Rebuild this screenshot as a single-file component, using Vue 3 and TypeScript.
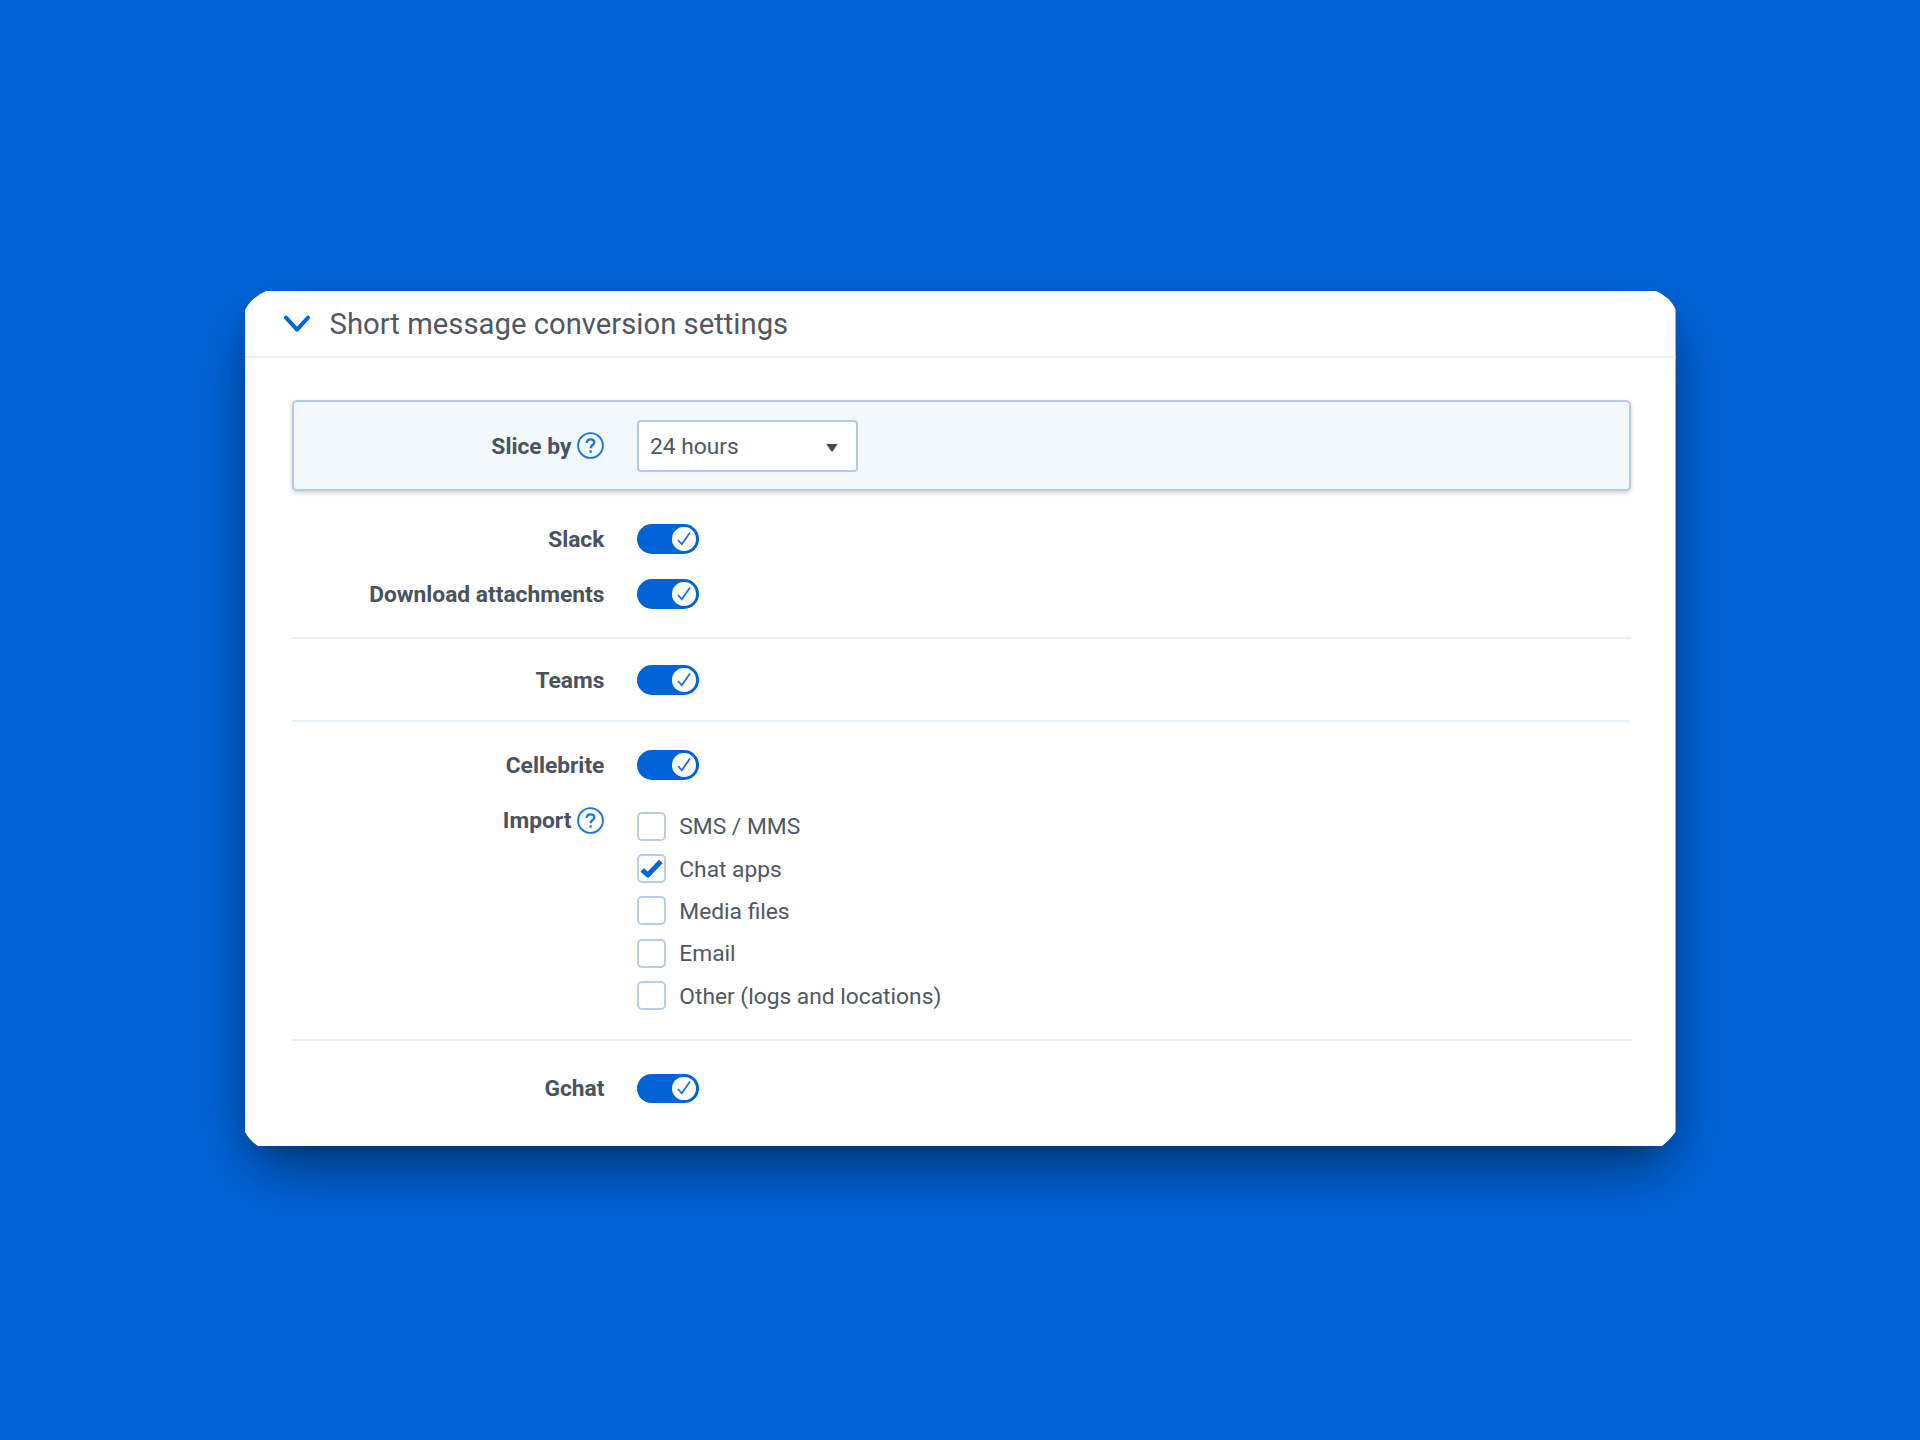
<template>
  <main class="stage">
    <div class="card-shadow">
      <section class="card">
        <header class="card-header">
          <svg class="chevron" width="28" height="20" viewBox="0 0 28 20">
            <path d="M3 3.6 L14 15.6 L25 3.6" />
          </svg>
          <h1 class="title">Short message conversion settings</h1>
        </header>

        <div class="card-body">
          <div class="slice-row">
            <div class="label">
              <span>Slice by</span>
              <svg class="help" viewBox="0 0 27 27">
                <circle cx="13.5" cy="13.5" r="12.4" />
                <path class="help-mark" d="M9.7 11 C9.7 8.6 11.3 7.3 13.6 7.3 C15.9 7.3 17.3 8.5 17.3 10.4 C17.3 13 13.6 13.1 13.6 16.2 M13.6 18.2 V20.7" />
              </svg>
            </div>
            <button class="select" type="button">
              <span>24 hours</span>
              <svg class="caret" width="12" height="8" viewBox="0 0 12 8">
                <path d="M0.4 0 H11.6 L7 7 Q6 8 5 7 Z" />
              </svg>
            </button>
          </div>

          <section v-for="group in groups" :key="group.id" class="group" :class="group.id">
            <div v-for="name in group.toggles" :key="name" class="row">
              <div class="label"><span>{{ name }}</span></div>
              <button class="toggle" type="button" role="switch" aria-checked="true" :aria-label="name">
                <span class="knob">
                  <svg width="14" height="16" viewBox="0 0 14 16">
                    <path d="M1 9 L4.8 13.3 L13 1.5" />
                  </svg>
                </span>
              </button>
            </div>

            <div v-if="group.id === 'cellebrite'" class="import-row">
              <div class="label">
                <span>Import</span>
                <svg class="help" viewBox="0 0 27 27">
                  <circle cx="13.5" cy="13.5" r="12.4" />
                  <path class="help-mark" d="M9.7 11 C9.7 8.6 11.3 7.3 13.6 7.3 C15.9 7.3 17.3 8.5 17.3 10.4 C17.3 13 13.6 13.1 13.6 16.2 M13.6 18.2 V20.7" />
                </svg>
              </div>
              <div class="options">
                <div
                  v-for="option in importOptions"
                  :key="option.label"
                  class="option"
                  @click="option.checked = !option.checked"
                >
                  <span class="checkbox">
                    <svg v-if="option.checked" width="25" height="25" viewBox="0 0 25 25">
                      <path d="M3.2 13.8 L8.8 19 L21.8 5.6" />
                    </svg>
                  </span>
                  <span>{{ option.label }}</span>
                </div>
              </div>
            </div>
          </section>
        </div>
      </section>
    </div>
  </main>
</template>

<script setup lang="ts">
import { ref } from 'vue'

interface Group {
  id: string
  toggles: string[]
}

interface ImportOption {
  label: string
  checked: boolean
}

const groups: Group[] = [
  { id: 'slack', toggles: ['Slack', 'Download attachments'] },
  { id: 'teams', toggles: ['Teams'] },
  { id: 'cellebrite', toggles: ['Cellebrite'] },
  { id: 'gchat', toggles: ['Gchat'] }
]

const importOptions = ref<ImportOption[]>([
  { label: 'SMS / MMS', checked: false },
  { label: 'Chat apps', checked: true },
  { label: 'Media files', checked: false },
  { label: 'Email', checked: false },
  { label: 'Other (logs and locations)', checked: false }
])
</script>

<style>
body {
  margin: 0;
  background: #0063d8;
}
</style>

<style scoped>
.stage {
  box-sizing: border-box;
  width: 1920px;
  height: 1440px;
  padding: 291px 0 0 245px;
  overflow: hidden;
  background: #0063d8;
  color: #4f5862;
  font-family: Roboto, 'Liberation Sans', sans-serif;
  font-size: 22.77px;
}

.card-shadow {
  width: 1430.5px;
  height: 855px;
  border-radius: 28px;
  box-shadow:
    0 28px 60px -6px rgba(0, 0, 0, 0.46),
    0 10px 24px -14px rgba(0, 0, 0, 0.3);
}

.card {
  width: 100%;
  height: 100%;
  background: #fff;
  clip-path: path('M0 19 Q7 6 21 0 H1411 Q1425 6 1430.5 18 V841 Q1425 849 1417 855 H13 Q5 850 0 841 Z');
}

.card-header {
  display: flex;
  align-items: center;
  box-sizing: border-box;
  height: 67px;
  padding: 0 38px;
  border-bottom: 2px solid #e7eff5;
}

.chevron {
  fill: none;
  stroke: #0064dc;
  stroke-width: 4;
  stroke-linecap: round;
  stroke-linejoin: round;
}

.title {
  margin: 0 0 0 18.5px;
  font-size: 29.27px;
  font-weight: 400;
  line-height: 36px;
}

.card-body {
  padding: 42px 45px 0 47px;
}

.slice-row {
  display: flex;
  align-items: center;
  box-sizing: border-box;
  height: 91px;
  padding-right: 20px;
  border: 2px solid #b9cae0;
  border-radius: 5px;
  background: #f2f8fb;
  box-shadow: 0 2px 4px rgba(60, 75, 100, 0.28);
}

.label {
  display: flex;
  justify-content: flex-end;
  align-items: center;
  gap: 6px;
  width: 312.4px;
  margin-right: 32.6px;
  color: #49525d;
  font-weight: 700;
  line-height: 28px;
}

.label span {
  padding-top: 1px;
}

.slice-row .label {
  width: 310.4px;
}

.slice-row .label span,
.row .label span {
  padding-top: 2px;
}

.help {
  width: 27px;
  height: 27px;
  fill: none;
  stroke: #1b76e2;
  stroke-width: 1.9;
}

.help-mark {
  stroke-width: 2.3;
}

.select {
  display: flex;
  justify-content: space-between;
  align-items: center;
  box-sizing: border-box;
  width: 221px;
  height: 52px;
  padding: 1px 18px 0 11px;
  border: 2px solid #b7c9e1;
  border-radius: 4px;
  background: #fff;
  color: inherit;
  font: inherit;
}

.caret {
  margin-top: 4px;
  fill: #434c57;
}

.group {
  box-sizing: border-box;
  border-bottom: 2px solid #e6eff7;
}

.slack {
  display: flex;
  flex-direction: column;
  gap: 25.5px;
  height: 148px;
  padding-top: 33px;
}

.teams {
  height: 83px;
  padding-top: 26px;
}

.cellebrite {
  height: 319px;
  padding-top: 28px;
}

.gchat {
  padding-top: 32.5px;
  border-bottom: 0;
}

.row {
  display: flex;
  align-items: center;
  height: 29.5px;
}

.toggle {
  display: flex;
  justify-content: flex-end;
  align-items: center;
  box-sizing: border-box;
  width: 62px;
  height: 29.5px;
  padding: 0 3px;
  border: 0;
  border-radius: 15px;
  background: #0063d8;
}

.knob {
  display: flex;
  justify-content: center;
  align-items: center;
  width: 23.5px;
  height: 23.5px;
  border-radius: 50%;
  background: #fff;
}

.knob svg {
  fill: none;
  stroke: #1a74de;
  stroke-width: 1.8;
}

.import-row {
  display: flex;
  align-items: flex-start;
  padding-top: 26.5px;
}

.options {
  display: flex;
  flex-direction: column;
  gap: 13.35px;
  padding-top: 5.7px;
}

.option {
  display: flex;
  align-items: center;
  gap: 13.3px;
  height: 29px;
}

.option > span:last-child {
  padding-top: 1px;
}

.checkbox {
  display: flex;
  justify-content: center;
  align-items: center;
  box-sizing: border-box;
  width: 29px;
  height: 29px;
  border: 2px solid #bacce3;
  border-radius: 5px;
  background: #fff;
}

.checkbox svg {
  fill: none;
  stroke: #0064dc;
  stroke-width: 5;
  stroke-linejoin: round;
}
</style>
